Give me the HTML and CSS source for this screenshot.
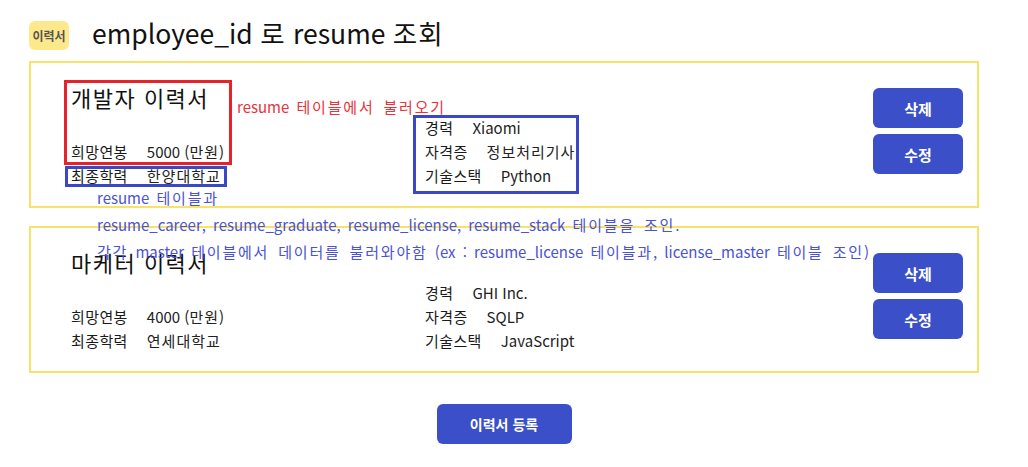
FILE: index.html
```html
<!DOCTYPE html>
<html lang="ko">
<head>
<meta charset="utf-8">
<title>employee_id 로 resume 조회</title>
<link rel="stylesheet" href="styles.css">
</head>
<body>
<div class="page">
  <header class="head">
    <span class="badge">이력서</span>
    <h1 class="title">employee_id <span class="ko">로</span> resume <span class="ko">조회</span></h1>
  </header>

  <section class="card">
    <div class="col-left">
      <h2 class="resume-title">개발자 이력서</h2>
      <div class="rows">
        <div class="row"><span class="label">희망연봉</span><span>5000 (<span class="ko">만원</span>)</span></div>
        <div class="row"><span class="label">최종학력</span><span class="ko">한양대학교</span></div>
      </div>
    </div>
    <div class="col-right">
      <div class="row"><span class="label">경력</span><span>Xiaomi</span></div>
      <div class="row"><span class="label">자격증</span><span class="ko">정보처리기사</span></div>
      <div class="row"><span class="label">기술스택</span><span>Python</span></div>
    </div>
    <div class="actions">
      <button class="btn">삭제</button>
      <button class="btn">수정</button>
    </div>
  </section>

  <section class="card">
    <div class="col-left">
      <h2 class="resume-title">마케터 이력서</h2>
      <div class="rows">
        <div class="row"><span class="label">희망연봉</span><span>4000 (<span class="ko">만원</span>)</span></div>
        <div class="row"><span class="label">최종학력</span><span class="ko">연세대학교</span></div>
      </div>
    </div>
    <div class="col-right">
      <div class="row"><span class="label">경력</span><span>GHI Inc.</span></div>
      <div class="row"><span class="label">자격증</span><span>SQLP</span></div>
      <div class="row"><span class="label">기술스택</span><span>JavaScript</span></div>
    </div>
    <div class="actions">
      <button class="btn">삭제</button>
      <button class="btn">수정</button>
    </div>
  </section>

  <div class="footer">
    <button class="btn btn-wide">이력서 등록</button>
  </div>

  <div class="notes">
    <div class="box box-red"></div>
    <div class="box box-blue-edu"></div>
    <div class="box box-blue-right"></div>
    <p class="note note-red">resume <span class="ko">테이블에서 불러오기</span></p>
    <p class="note note-blue n1">resume <span class="ko">테이블과</span></p>
    <p class="note note-blue n2">resume_career, resume_graduate, resume_license, resume_stack <span class="ko">테이블을 조인</span>.</p>
    <p class="note note-blue n3"><span class="ko">각각</span> master <span class="ko">테이블에서 데이터를 불러와야함</span> (ex : resume_license <span class="ko">테이블과</span>, license_master <span class="ko">테이블 조인</span>)</p>
  </div>
</div>
</body>
</html>
```
FILE: styles.css
```css
* { box-sizing: border-box; }
body {
  margin: 0;
  background: #fff;
  font-family: "Noto Sans CJK KR", "Noto Sans", sans-serif;
  color: #1f1f1f;
}
.page {
  position: relative;
  width: 1028px;
  padding: 21px 0 0 29px;
}
.head {
  display: flex;
  align-items: center;
  gap: 23px;
  height: 29px;
}
.badge {
  width: 40px;
  height: 29px;
  border-radius: 6px;
  background: #fde98b;
  color: #555;
  font-size: 12px;
  font-weight: 700;
  display: flex;
  align-items: center;
  justify-content: center;
}
.title {
  margin: 0 0 6px;
  font-size: 26.5px;
  font-weight: 400;
  color: #111;
  line-height: 29px;
}
.title .ko { letter-spacing: 1px; }
.card {
  width: 950px;
  height: 147px;
  border: 2px solid #f7e26a;
  margin-top: 11px;
  display: flex;
  padding: 20px 14px 18px 40px;
}
.card + .card { margin-top: 18px; }
.col-left {
  width: 354px;
  display: flex;
  flex-direction: column;
  justify-content: space-between;
}
.resume-title {
  margin: 0;
  font-size: 22px;
  font-weight: 400;
  line-height: 29px;
  color: #111;
  letter-spacing: 1.5px;
}
.col-right {
  flex: 1;
  display: flex;
  flex-direction: column;
  justify-content: flex-end;
}
.row {
  display: flex;
  gap: 19px;
  font-size: 15px;
  line-height: 24px;
  color: #222;
}
.row .ko { letter-spacing: 1px; }
.label { color: #1a1a1a; letter-spacing: 0.4px; }
.actions {
  display: flex;
  flex-direction: column;
  gap: 6px;
  margin-top: 5px;
}
.btn {
  width: 90px;
  height: 40px;
  border: none;
  border-radius: 6px;
  background: #3a4fc8;
  color: #fff;
  font-family: "Noto Sans CJK KR", "Noto Sans", sans-serif;
  font-size: 15px;
  font-weight: 700;
}
.footer {
  width: 950px;
  display: flex;
  justify-content: center;
  margin-top: 31px;
}
.btn-wide { width: 135px; font-size: 14px; }

.notes { position: absolute; left: 0; top: 0; width: 0; height: 0; }
.box { position: absolute; border: 3px solid #3a47c7; }
.box-red { left: 64px; top: 80px; width: 168px; height: 85px; border-color: #e8222b; }
.box-blue-edu { left: 65px; top: 166px; width: 162px; height: 21px; }
.box-blue-right { left: 413px; top: 115px; width: 166px; height: 79px; }
.note {
  position: absolute;
  margin: 0;
  white-space: nowrap;
  font-size: 15px;
  line-height: 20px;
  word-spacing: 3px;
}
.note .ko { letter-spacing: 1.8px; }
.note-red { left: 237px; top: 97px; color: #e8323c; }
.note-blue { color: #4a52d6; left: 97px; }
.n1 { top: 188px; }
.n2 { top: 215px; }
.n3 { top: 242px; }
```
